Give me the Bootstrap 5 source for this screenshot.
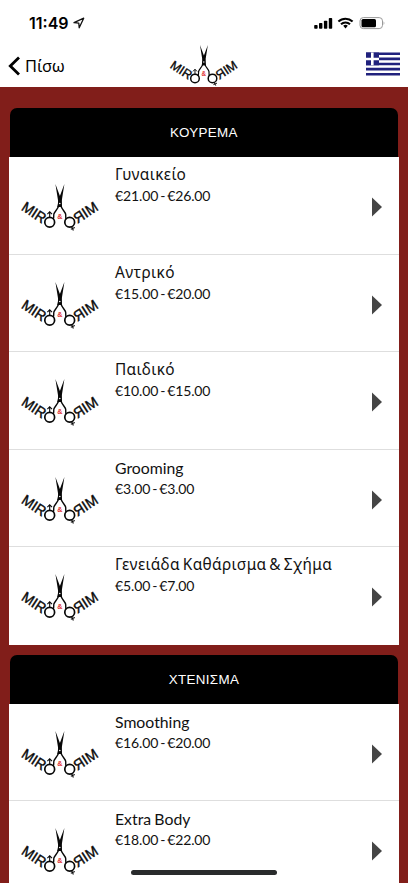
<!DOCTYPE html>
<html lang="el">
<head>
<meta charset="utf-8">
<meta name="viewport" content="width=device-width, initial-scale=1">
<title>Miro &amp; Miro</title>
<link href="https://cdn.jsdelivr.net/npm/bootstrap@5.3.0/dist/css/bootstrap.min.css" rel="stylesheet">
<style>
html,body{height:883px;overflow:hidden}
body{background:#811e1a;font-family:Lato,"Noto Sans",sans-serif;color:#111}
svg{display:block;flex:none}
.top-area{height:87px}
.status-row{height:44px;padding:2px 23px 0 29px}
.clock{font:600 16px/1 Inter,sans-serif;color:#000}
.title-row{height:43px;padding:0 8px 0 8px}
.back-label{font:16.4px/24px "Noto Sans",sans-serif}
.service-group{margin:0 9.3px;width:389.4px}
.group-title{height:49px;margin:0 .7px;border-radius:7px 7px 0 0;background:#000;color:#fff;font:13.4px/50px "Liberation Sans",Arial,sans-serif;letter-spacing:.35px}
.service{height:97.5px;padding:7px 17px 0 10.7px;border:0;border-bottom:1px solid #dedede;border-radius:0;background:#fff}
.service:last-child{border-bottom:0}
.service-name{font-size:15.8px;line-height:21px;white-space:nowrap;color:#111;word-spacing:-.8px}
.service-name:lang(el){font-family:"Noto Sans",sans-serif;font-size:15.4px;letter-spacing:.38px;word-spacing:-1.5px}
.service-price{font-size:14px;line-height:22px;color:#111;letter-spacing:-.12px;word-spacing:-1.5px}
.home-bar{left:131px;bottom:8px;width:146px;height:5px;background:#292b2c}
</style>
<script src="https://cdn.jsdelivr.net/npm/bootstrap@5.3.0/dist/js/bootstrap.bundle.min.js"></script>
</head>
<body>
<svg width="0" height="0" class="position-absolute">
 <symbol id="logo" viewBox="0 0 80 50">
  <g fill="#080808">
   <path d="M35.4 1 41.6 17.6 41.8 24H37.4L38.3 19Z"/>
   <path d="M44.4 1 38.2 17.6 37.6 24H42L41.7 18Z"/>
   <g font-family="Liberation Sans, Arial, sans-serif" font-size="14.6" stroke="#080808" stroke-width=".4">
    <text transform="translate(.4 26.6) rotate(33)" textLength="26" lengthAdjust="spacingAndGlyphs">MIR</text>
    <text transform="translate(79.2 26.6) rotate(-33) scale(-1 1)" textLength="26" lengthAdjust="spacingAndGlyphs">MIR</text>
   </g>
  </g>
  <g fill="none" stroke="#080808" stroke-width="1.7">
   <circle cx="29.7" cy="39.2" r="4.9"/><circle cx="49.7" cy="39.2" r="4.9"/>
   <path stroke-width="1.4" d="M38.8 22.5C37.5 27 34.2 28.5 33.8 31.5 33.6 33.4 34 35 33.2 36.4M40.8 22.5C42 27 45.3 28.5 45.7 31.5 45.9 33.4 45.4 35 46.2 36.4"/>
   <path stroke-width="1.1" d="M29.7 34.5V29M27.4 31.2 29.7 28.7 32 31.2M51.5 43.5 53.4 47.4M50.8 46.3 54.8 44.6"/>
  </g>
  <circle cx="39.8" cy="20.5" r=".8" fill="#fff"/>
  <text x="39.8" y="36.2" text-anchor="middle" font-family="Liberation Sans, Arial, sans-serif" font-size="7.2" font-weight="700" fill="#e03034">&amp;</text>
 </symbol>
 <symbol id="arrow" viewBox="0 0 10 20"><path d="M0 .5 10 10 0 19.5Z" fill="#454545"/></symbol>
</svg>

<header class="top-area bg-white">
 <div class="status-row d-flex align-items-center">
  <span class="clock">11:49</span>
  <svg class="ms-1" width="12" height="12" viewBox="0 0 12 12"><path d="M1 5.7 10.7 1.2 6.2 10.8 5.8 6.2Z" fill="none" stroke="#111" stroke-width="1.3" stroke-linejoin="round"/></svg>
  <svg class="ms-auto" width="73" height="14" viewBox="0 0 73 14">
   <g fill="#000"><rect x="2.2" y="9" width="3.4" height="3.8" rx=".8"/><rect x="7" y="7" width="3.4" height="5.8" rx=".8"/><rect x="11.9" y="4.8" width="3.4" height="8" rx=".8"/><rect x="16.8" y="2" width="3.4" height="10.8" rx=".8"/><path d="M31.2 9.8a3.6 3.6 0 0 1 4.6 0L33.5 12.4Z"/></g>
   <path d="M26.4 5.5a10.3 10.3 0 0 1 14.2 0M29 8.3a6.4 6.4 0 0 1 9 0" fill="none" stroke="#000" stroke-width="2"/>
   <rect x="48" y="1.6" width="22.5" height="11" rx="3.3" fill="none" stroke="#999"/><rect x="49.5" y="3" width="14.5" height="8.2" rx="1.5"/><path d="M71.6 5.2q1.5 1.8 0 3.7Z" fill="#999"/>
  </svg>
 </div>
 <nav class="title-row d-flex align-items-center justify-content-between position-relative">
  <a href="#" class="d-flex align-items-center text-decoration-none text-black">
   <svg width="13" height="20" viewBox="0 0 13 20"><path d="M11 1.5 2.3 10 11 18.5" fill="none" stroke="#000" stroke-width="2.8"/></svg>
   <span class="back-label ms-1">Πίσω</span>
  </a>
  <svg class="position-absolute start-50 translate-middle-x" width="70" height="44" viewBox="0 0 80 50"><use href="#logo" width="80" height="50"/></svg>
  <svg width="34" height="24" viewBox="0 0 34 24" class="mb-1"><rect width="34" height="24" fill="#fff"/><path d="M0 1.8H34M0 6.9H34M0 12H34M0 17.1H34M0 22.2H34" stroke="#20217d" stroke-width="2.6"/><path fill="#20217d" d="M0 .5H13V13.3H0Z"/><path d="M6.3.5V13.3M0 7H13" stroke="#fff" stroke-width="2.6"/></svg>
 </nav>
</header>

<main>
 <section class="service-group" style="padding-top:21px">
  <h2 class="group-title text-center">ΚΟΥΡΕΜΑ</h2>
  <div class="list-group rounded-0" data-services="Γυναικείο|€21.00 - €26.00;Αντρικό|€15.00 - €20.00;Παιδικό|€10.00 - €15.00;Grooming|€3.00 - €3.00;Γενειάδα Καθάρισμα &amp; Σχήμα|€5.00 - €7.00"></div>
 </section>
 <section class="service-group" style="padding-top:10px">
  <h2 class="group-title text-center">ΧΤΕΝΙΣΜΑ</h2>
  <div class="list-group rounded-0" data-services="Smoothing|€16.00 - €20.00;Extra Body|€18.00 - €22.00"></div>
 </section>
</main>
<div class="home-bar position-fixed rounded-pill"></div>
<script>
document.querySelectorAll('[data-services]').forEach(list => {
  list.innerHTML = list.dataset.services.split(';').map(item => {
    const [name, price] = item.split('|');
    const lang = /[Α-ώ]/.test(name) ? 'el' : 'en';
    return `<a href="#" class="service list-group-item d-flex align-items-start">
      <svg width="80" height="50" style="margin-top:19px"><use href="#logo"/></svg>
      <div class="flex-grow-1" style="margin-left:15px"><div class="service-name" lang="${lang}">${name.replace('&','&amp;')}</div><div class="service-price">${price}</div></div>
      <svg width="10" height="20" style="margin-top:33px"><use href="#arrow"/></svg></a>`;
  }).join('');
});
</script>
</body>
</html>
